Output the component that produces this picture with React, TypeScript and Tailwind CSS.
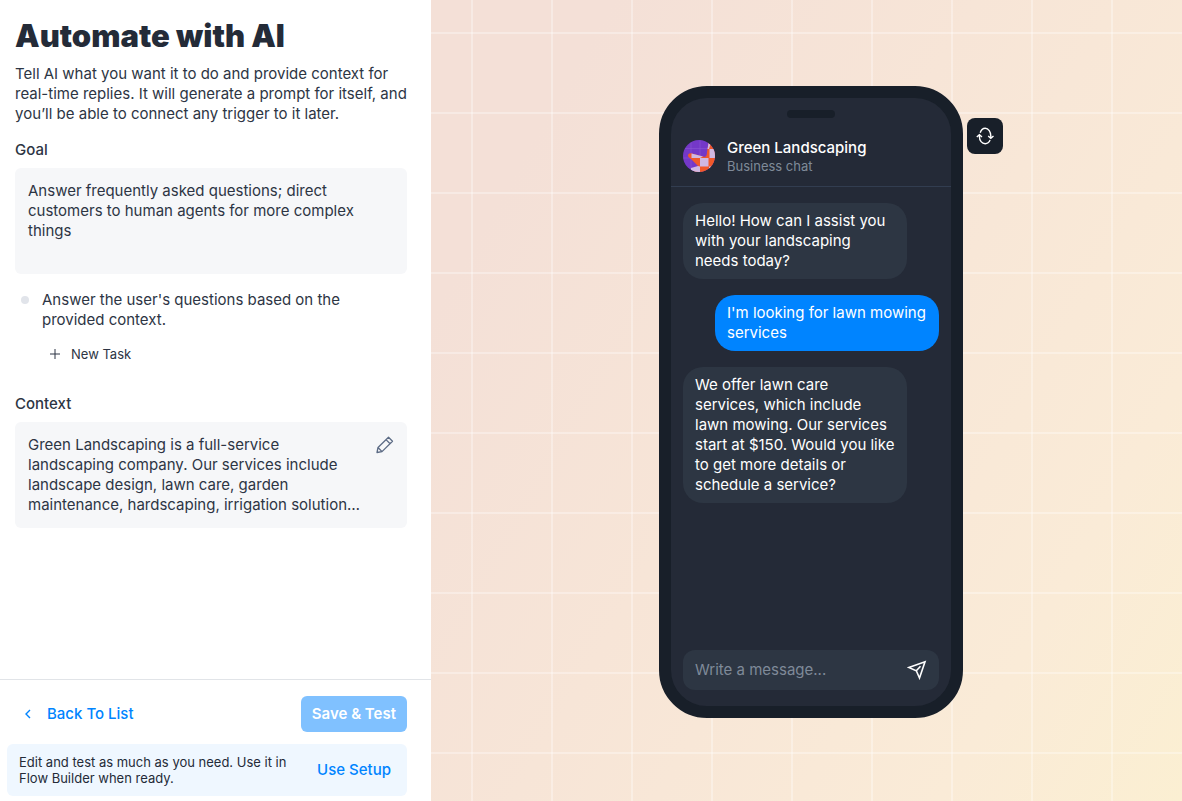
import { useState } from 'react';

type Message = {
  from: 'bot' | 'user';
  text: string;
};

const messages: Message[] = [
  { from: 'bot', text: 'Hello! How can I assist you with your landscaping needs today?' },
  { from: 'user', text: "I'm looking for lawn mowing services" },
  {
    from: 'bot',
    text: 'We offer lawn care services, which include lawn mowing. Our services start at $150. Would you like to get more details or schedule a service?',
  },
];

const tasks = ["Answer the user's questions based on the provided context."];

const PlusIcon = () => (
  <svg width="10" height="10" viewBox="0 0 10 10" fill="none" stroke="currentColor" aria-hidden="true">
    <path d="M5 0v10M0 5h10" />
  </svg>
);

const ChevronLeftIcon = () => (
  <svg width="6" height="10" viewBox="0 0 6 10" fill="none" stroke="currentColor" strokeWidth="1.4" aria-hidden="true">
    <path d="M5 1 1 5l4 4" />
  </svg>
);

const PencilIcon = () => (
  <svg width="18" height="18" viewBox="0 0 18 18" fill="none" stroke="currentColor" strokeWidth="1.3" strokeLinejoin="round" aria-hidden="true">
    <path d="M1 16.5 2 11.5 12.5 1.2 16.5 5.2 6 15.6ZM10 3.6l4.1 4.1M2 11.5l4 4.1" />
  </svg>
);

const RefreshIcon = () => (
  <svg width="20" height="20" viewBox="0 0 20 20" fill="none" stroke="currentColor" strokeWidth="1.4" aria-hidden="true">
    <path d="M5.200 6.800C6.200 3.800 8.200 2.300 10.200 2.300c3.300 0 5.600 3.500 5.600 7.700v2" />
    <path d="M4.400 9v1.500c0 4.200 2.500 7.200 5.800 7.200 2 0 3.900-1.300 4.900-3.700" />
    <path d="M13.200 10 15.800 12.300 18.500 10" />
    <path d="M1.800 11 4.400 8.700 7 11" />
  </svg>
);

const SendIcon = () => (
  <svg width="20" height="20" viewBox="0 0 20 20" fill="none" stroke="currentColor" strokeWidth="1.6" aria-hidden="true">
    <path d="M1.800 7.500 18 1.800 12.500 18 9.300 10.800ZM9.300 10.800 13.500 6.300" />
  </svg>
);

const Avatar = () => (
  <svg width="32" height="32" viewBox="0 0 32 32" aria-hidden="true">
    <clipPath id="avatar">
      <circle cx="16" cy="16" r="16" />
    </clipPath>
    <g clipPath="url(#avatar)">
      <path fill="#7438c8" d="M0 0h32v32H0z" />
      <path stroke="#8a55d4" strokeWidth=".6" d="M8 0v32M17 0v32M0 8.500h32M0 18h32" />
      <path fill="#f1592a" d="M5 16q0-3.500 4-2.500L22 17q2-1 2-5L25.500 3 32 6v26H8l8-5-8-8Q5 17 5 16Z" />
      <path fill="#d0b8e2" d="M8.500 13.500 20 16.500 17 18H8.500ZM17 18h8.500v8.500H17ZM26.500 9H32v9h-5.500ZM25.500 3l2 1-1.500 5h-1.500ZM8 28l7-2 2 .5V32H8ZM26 26.500h6V32h-6Z" />
    </g>
  </svg>
);

const App = () => {
  const [goal, setGoal] = useState(
    'Answer frequently asked questions; direct customers to human agents for more complex things'
  );
  const [draft, setDraft] = useState('');

  return (
    <div className="flex min-h-screen font-[Inter,sans-serif] text-[15px] leading-5 text-[#2d3544]">
      {/* Settings */}
      <aside className="flex w-[431px] shrink-0 flex-col bg-white">
        <div className="flex-1 pt-4 pr-6 pl-[15px]">
          <h1 className="text-[31px] leading-10 font-black text-[#242b38]">Automate with AI</h1>
          <p className="mt-2">
            Tell AI what you want it to do and provide context for real-time replies. It will generate a prompt for
            itself, and you’ll be able to connect any trigger to it later.
          </p>

          <label htmlFor="goal" className="mt-4 block font-medium">Goal</label>
          <textarea
            id="goal"
            rows={4}
            value={goal}
            onChange={(e) => setGoal(e.target.value)}
            className="mt-2 block w-full resize-none rounded-md bg-[#f6f7f9] p-[13px]"
          />

          <ul className="mt-4">
            {tasks.map((task) => (
              <li key={task} className="flex gap-[13px] pr-12 pl-[6px]">
                <span className="mt-[6px] size-2 shrink-0 rounded-full bg-[#e1e4ea]" />
                {task}
              </li>
            ))}
          </ul>
          <button type="button" className="mt-1 ml-[35px] flex h-10 items-center gap-[11px] text-[13px]">
            <PlusIcon />
            New Task
          </button>

          <h2 className="mt-5 font-medium">Context</h2>
          <div className="mt-2 flex items-start justify-between rounded-md bg-[#f6f7f9] p-[13px]">
            <p className="w-[332px]">
              Green Landscaping is a full-service landscaping company. Our services include landscape design, lawn
              care, garden maintenance, hardscaping, irrigation solution…
            </p>
            <button type="button" aria-label="Edit context" className="mt-px text-[#5c6b85]">
              <PencilIcon />
            </button>
          </div>
        </div>

        {/* Footer actions */}
        <footer className="border-t border-[#e1e4e8] pt-4 pr-6 pb-[5px] pl-[7px]">
          <div className="flex items-center justify-between">
            <a href="#list" className="flex items-center gap-4 pl-[18px] font-medium text-[#0084ff]">
              <ChevronLeftIcon />
              Back To List
            </a>
            <button type="button" disabled className="h-9 rounded-md bg-[#80c1ff] px-[11px] font-semibold text-white">
              Save &amp; Test
            </button>
          </div>
          <div className="mt-3 flex items-center justify-between rounded-md bg-[#eff7ff] py-[10px] pr-4 pl-3">
            <p className="w-[275px] text-[13px] leading-4 text-[#242b38]">
              Edit and test as much as you need. Use it in Flow Builder when ready.
            </p>
            <button type="button" className="font-medium text-[#0084ff]">Use Setup</button>
          </div>
        </footer>
      </aside>

      {/* Preview */}
      <main className="relative flex flex-1 items-center justify-center bg-[linear-gradient(120deg,#f4e0d7_15%,#f7e5d7_45%,#faebd7_80%,#fbefd2)] pt-[3px] pl-[9px]">
        <div className="absolute inset-0 bg-[linear-gradient(#ffffff50_2px,transparent_2px),linear-gradient(90deg,#ffffff50_2px,transparent_2px)] bg-size-[80px_80px] bg-position-[40px_32px]" />
        <div className="relative">
          <section className="flex h-[632px] w-[304px] flex-col rounded-[48px] border-12 border-[#181f29] bg-[#242a37] text-white">
            <div className="mx-auto mt-3 h-2 w-12 rounded-full bg-[#181f29]" />
            <header className="mt-5 flex items-center gap-3 border-b border-[#323d50] px-3 pb-3">
              <Avatar />
              <div>
                <h2 className="font-medium">Green Landscaping</h2>
                <p className="text-[13px] leading-4 text-[#7f8a99]">Business chat</p>
              </div>
            </header>

            <div className="flex flex-1 flex-col gap-4 px-3 pt-4">
              {messages.map((message) => (
                <p
                  key={message.text}
                  className={`w-56 rounded-[20px] px-3 py-2 ${
                    message.from === 'user' ? 'self-end bg-[#0084ff]' : 'bg-[#2d3643]'
                  }`}
                >
                  {message.text}
                </p>
              ))}
            </div>

            <form
              onSubmit={(e) => e.preventDefault()}
              className="mx-3 mb-4 flex h-10 items-center rounded-xl bg-[#2d3643] px-3"
            >
              <input
                type="text"
                aria-label="Message"
                placeholder="Write a message..."
                value={draft}
                onChange={(e) => setDraft(e.target.value)}
                className="min-w-0 flex-1 placeholder:text-[#7f8a99]"
              />
              <button type="submit" aria-label="Send">
                <SendIcon />
              </button>
            </form>
          </section>

          <button
            type="button"
            aria-label="Restart chat"
            className="absolute top-8 left-full ml-1 flex size-9 items-center justify-center rounded-lg bg-[#181f29] text-white"
          >
            <RefreshIcon />
          </button>
        </div>
      </main>
    </div>
  );
};

export default App;
